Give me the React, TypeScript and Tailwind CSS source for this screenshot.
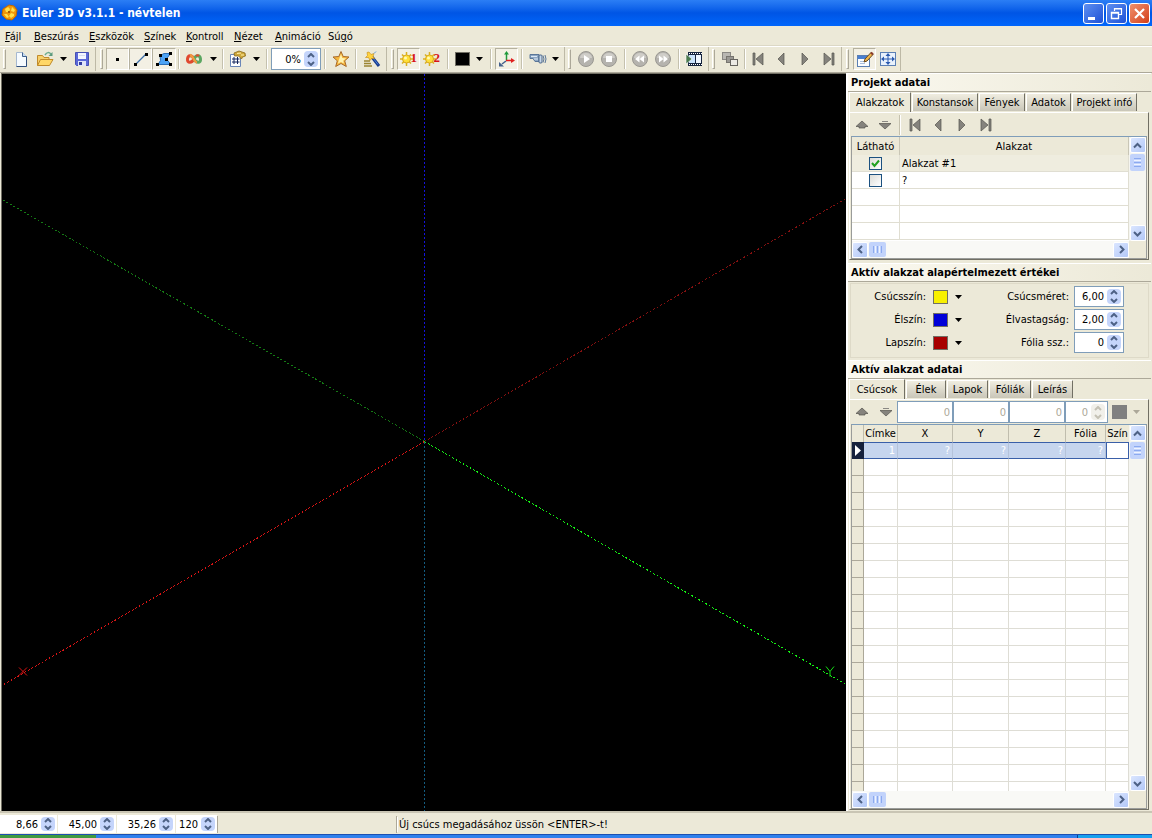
import type { ReactNode } from "react";

/* ---------- icons ---------- */

function Icon({ children, w = 18, h = 18 }: { children: ReactNode; w?: number; h?: number }) {
  return (
    <svg width={w} height={h} viewBox={`0 0 ${w} ${h}`} className="block shrink-0" aria-hidden="true">
      {children}
    </svg>
  );
}

const AppIcon = () => (
  <Icon>
    <path d="M8 1l5 1 3 4-1 6-4 4-6-1-4-4 1-6z" fill="#f0960a" stroke="#c26a00" />
    <path d="M4 5l3-2 2 2-1 3-3 0zM11 3l3 3-1 2-3-1zM3 10l3 0 2 3-2 1zM10 9l3 1 0 2-3 2-2-2z" fill="#ffe04a" />
    <path d="M7 7l2 0 0 2-2 0z" fill="#a85a00" />
  </Icon>
);

const NewIcon = () => (
  <Icon>
    <path d="M4.500 2.500h6l4 4v10h-10z" fill="#f6fbff" stroke="#a5b8d0" />
    <path d="M10.500 2.500v4h4" fill="#c7dcf2" stroke="#41638f" />
    <path d="M14.500 6.500v10h-10" fill="none" stroke="#2f4f7e" />
  </Icon>
);

const OpenIcon = () => (
  <Icon>
    <path d="M1.500 15.500v-10h5l1.500 2h5v3" fill="#f7d06a" stroke="#c08a2a" />
    <path d="M1.500 15.500l3-6h12.500l-3.500 6z" fill="#ffd766" stroke="#c08a2a" />
    <path d="M9 5c2-3 4-3 6-1" fill="none" stroke="#6aaa8c" strokeWidth="1.500" />
    <path d="M16.500 2v4h-4z" fill="#5a9a7c" />
  </Icon>
);

const SaveIcon = () => (
  <Icon>
    <path d="M2.500 2.500h13v13h-12l-1-1z" fill="#5a68d8" stroke="#4650b4" />
    <rect x="5" y="3" width="8" height="6" fill="#f2f5ff" />
    <path d="M6 5.500h6" stroke="#d4daf2" />
    <rect x="5" y="11" width="8" height="5" fill="#dfe4f8" />
    <rect x="6" y="12" width="3" height="3" fill="#323c9e" />
  </Icon>
);

const DotIcon = () => (
  <Icon>
    <rect x="7" y="8" width="3" height="3" fill="#000" />
  </Icon>
);

const LineIcon = () => (
  <Icon>
    <path d="M4 14L14 4" stroke="#3b6ea8" strokeWidth="1.300" />
    <rect x="2" y="13" width="3" height="3" fill="#000" />
    <rect x="13" y="3" width="3" height="3" fill="#000" />
  </Icon>
);

const PolyIcon = () => (
  <Icon>
    <path d="M5 5.500l4-2 6.500 0-4 5.500 4.500 5.500H3l2.500-4z" fill="#4da3f5" stroke="#2c6fb8" />
    {[[4, 4], [14, 2], [10, 8], [14, 13], [1, 13]].map(([x, y]) => (
      <rect key={`${x}-${y}`} x={x} y={y} width="3" height="3" fill="#000" />
    ))}
  </Icon>
);

const InfinityIcon = () => (
  <Icon>
    <path d="M9 9C7 5 3 4.500 2.500 9S7 13 9 9" fill="none" stroke="#e0482e" strokeWidth="3" />
    <path d="M9 9c2-4 6-4.500 6.500 0S11 13 9 9" fill="none" stroke="#5aa660" strokeWidth="3" />
    <path d="M5 5c3 .5 4 7 7 7.500" fill="none" stroke="#f09a40" strokeWidth="2.500" />
    <path d="M11 6c1-1 2-1 3 0" stroke="#e04a30" strokeWidth="2" fill="none" />
  </Icon>
);

const HashIcon = () => (
  <Icon>
    <path d="M1.500 4.500h10v12h-10z" fill="#fff" stroke="#6a86b8" />
    <path d="M5 7v7M8.500 7v7M3 9h7.500M3 12h7.500" stroke="#17285e" />
    <path d="M5 3l5-2 6 2 .5 3-3 1-1 2-3-3-4 0z" fill="#cfa83a" stroke="#8a6a1c" strokeWidth=".8" />
    <path d="M8 3.500l4-.5M12 5l3 0" stroke="#fff0a8" />
  </Icon>
);

const StarIcon = () => (
  <Icon>
    <path d="M9 1.500l2.200 5 5.800.5-4.300 3.800 1.600 5.700L9 13.500l-5.300 3 1.600-5.700L1 7l5.800-.5z" fill="#f6b73c" stroke="#a86a2a" />
    <path d="M9 4l1.300 4 4 .5-3 2 .5 3-2.800-1.500-3 1.500.7-3z" fill="#fff3b0" />
  </Icon>
);

const WandIcon = () => (
  <Icon>
    <path d="M9 7l7 9" stroke="#173a8c" strokeWidth="3" />
    <path d="M10 8l5 6.500" stroke="#4a7fd8" />
    <path d="M6 2l2 2.500 3-1-1 3 1.500 2-3 0-1.500 2-1.500-3-3 0 2-2-.5-3z" fill="#ffd23e" stroke="#c28a14" strokeWidth=".6" />
    <path d="M1 11h6M1 13.500h7M1 16h8" stroke="#9a8430" strokeWidth="1.300" />
    <path d="M11 3.500l2-2" stroke="#5a9ae0" />
  </Icon>
);

function SunIcon({ n }: { n: string }) {
  return (
    <span className="relative block h-[18px] w-[18px]">
      <Icon>
        <path d="M6.500 2v14M0 9h13M2 4.500l9 9M11 4.500l-9 9" stroke="#d9b020" strokeWidth="1.500" />
        <circle cx="6.500" cy="9" r="4" fill="#ffe03a" stroke="#d9a820" />
        <circle cx="5.500" cy="8" r="1.500" fill="#fff9b8" />
      </Icon>
      <span className="absolute top-0 left-[11px] font-['Liberation_Serif',serif] text-[13px] leading-[16px] font-bold text-[#d81414]">{n}</span>
    </span>
  );
}

const AxesIcon = () => (
  <Icon>
    <path d="M8.500 10V4" stroke="#1f9a3c" strokeWidth="1.500" />
    <path d="M6 4.500L8.500 1l2.500 3.500z" fill="#1f9a3c" />
    <path d="M8 10.500h6" stroke="#e02020" strokeWidth="1.500" />
    <path d="M13 8l4 2.500L13 13z" fill="#e02020" />
    <path d="M8 11l-4 3" stroke="#44618c" strokeWidth="1.500" />
    <path d="M1 12v4.500h5z" fill="#44618c" />
  </Icon>
);

const CameraIcon = () => (
  <Icon>
    <path d="M1 4.500h9v7H6l-2-3H1z" fill="#8fa8c4" stroke="#5a7698" />
    <path d="M2 6.500h6M5 9h4" stroke="#dce8f4" />
    <rect x="10" y="5" width="3" height="8" rx="1" fill="#c8d8ea" stroke="#4a6688" />
    <path d="M14 5.500q2 3.500 0 7M16 5q2 4 0 8" fill="none" stroke="#5a7698" />
  </Icon>
);

function RoundIcon({ d }: { d: string }) {
  return (
    <Icon>
      <circle cx="9" cy="9" r="7.500" fill="#b5b3ae" stroke="#9a9892" />
      <path d="M3 8a6 5 0 0 1 12 0" fill="#cfcdc8" />
      <path d={d} fill="#fff" />
    </Icon>
  );
}

const FilmIcon = () => (
  <Icon>
    <rect x="3" y="2" width="14" height="14" fill="#16243e" />
    <path d="M4 3.500h13M4 14.500h13" stroke="#fff" strokeDasharray="1 1" />
    <rect x="4" y="5" width="6" height="8" fill="#c9e2fb" />
    <rect x="11" y="5" width="5" height="8" fill="#f0f7ff" />
    <path d="M1 4l6 5-6 5z" fill="#4a7a4e" stroke="#fff" strokeWidth=".6" />
  </Icon>
);

const LayersIcon = () => (
  <Icon>
    <rect x="1.500" y="2.500" width="8" height="7" fill="#b9b7b2" stroke="#8a8883" />
    <rect x="5.500" y="6.500" width="7" height="6" fill="#9a9893" stroke="#77756f" />
    <rect x="9.500" y="9.500" width="7" height="6" fill="#eceae4" stroke="#66645f" />
  </Icon>
);

const EditIcon = () => (
  <Icon>
    <rect x="1.500" y="5.500" width="12" height="11" fill="#fbfdff" stroke="#5a7fb4" />
    <rect x="2" y="6" width="11" height="3" fill="#4a7fd0" />
    <path d="M4 11.500h6M4 13.500h5" stroke="#a9bedc" />
    <path d="M8 12l1-3 6-6.500 2 2L11 11z" fill="#f0b64c" stroke="#6a4a20" />
    <path d="M15 2.500l2 2" stroke="#8a3a2a" strokeWidth="2" />
  </Icon>
);

const FullIcon = () => (
  <Icon>
    <rect x="1.500" y="2.500" width="15" height="13" fill="#e8f1fc" stroke="#5a7fb4" />
    <path d="M9 5v8M4 9h10" stroke="#2a5ab0" />
    <path d="M9 3l2.500 3h-5zM9 15l2.500-3h-5zM2 9l3-2.500v5zM16 9l-3-2.500v5z" fill="#2a5ab0" />
  </Icon>
);

const NAV: Record<string, string> = {
  first: "M4 3h2v12H4zM14 3v12L7 9z",
  prev: "M12 3v12L6 9z",
  next: "M6 3v12l6-6z",
  last: "M12 3h2v12h-2zM4 3v12l7-6z",
  up: "M9 5l6 5.500h-3V12H6v-1.500H3z",
  down: "M9 13l6-5.500H3z",
};

function NavIcon({ k }: { k: string }) {
  return (
    <Icon>
      <path d={NAV[k]} fill="#85837d" stroke="#55534e" strokeWidth=".7" />
      {k === "down" && <path d="M6 5.500h6" stroke="#8a8883" />}
    </Icon>
  );
}

const Caret = ({ muted = false }: { muted?: boolean }) => (
  <Icon w={7} h={4}>
    <path d="M0 0h7L3.500 4z" fill={muted ? "#aca899" : "#000"} />
  </Icon>
);

/* ---------- shared controls ---------- */

function ToolButton({ label, w, pressed = false, children }: { label: string; w: string; pressed?: boolean; children: ReactNode }) {
  return (
    <button
      type="button"
      aria-label={label}
      className={`flex h-[22px] shrink-0 items-center justify-center ${w} ${
        pressed ? "border border-t-[#b5b19f] border-r-white border-b-white border-l-[#b5b19f] bg-[#f3f0e4]" : ""
      }`}
    >
      {children}
    </button>
  );
}

const Sep = ({ w }: { w: string }) => (
  <span className={`flex shrink-0 justify-center ${w}`}>
    <span className="h-[20px] w-[2px] border-r border-l border-r-white border-l-[#c5c1ae]" />
  </span>
);

function Band({ label, grip, end, children }: { label: string; grip: string; end: string; children: ReactNode }) {
  return (
    <div role="group" aria-label={label} className={`flex h-[24px] shrink-0 items-center border-r border-[#bdb9a6] ${end}`}>
      <span className={`flex shrink-0 justify-center ${grip}`}>
        <span className="h-[20px] w-[3px] border border-t-white border-r-[#aca899] border-b-[#aca899] border-l-white" />
      </span>
      {children}
    </div>
  );
}

function Spinner({ muted = false }: { muted?: boolean }) {
  const tone = muted ? "bg-[#f1f0ea]" : "bg-[#c5d5fb]";
  const ink = muted ? "#c4c1b4" : "#4d6185";
  return (
    <span className="flex w-[14px] shrink-0 flex-col self-stretch">
      <button type="button" aria-label="Növelés" className={`flex min-h-0 flex-1 items-center justify-center rounded-t-sm ${tone}`}>
        <Icon w={8} h={5}>
          <path d="M1 4l3-3 3 3" fill="none" stroke={ink} strokeWidth="2" />
        </Icon>
      </button>
      <button type="button" aria-label="Csökkentés" className={`flex min-h-0 flex-1 items-center justify-center rounded-b-sm ${tone}`}>
        <Icon w={8} h={5}>
          <path d="M1 1l3 3 3-3" fill="none" stroke={ink} strokeWidth="2" />
        </Icon>
      </button>
    </span>
  );
}

function NumberBox({ id, label, value, box, muted = false }: { id: string; label?: string; value: string; box: string; muted?: boolean }) {
  return (
    <span className={`flex shrink-0 items-center gap-[3px] bg-white p-[2px] ${box}`}>
      <input
        id={id}
        aria-label={label}
        defaultValue={value}
        disabled={muted}
        className={`w-0 min-w-0 flex-1 bg-transparent text-right outline-none ${muted ? "text-[#aca899]" : "text-black"}`}
      />
      <Spinner muted={muted} />
    </span>
  );
}

const ARROWS: Record<string, string> = {
  up: "M3 8.500l3.500-3.500L10 8.500",
  down: "M3 5l3.500 3.500L10 5",
  left: "M8 3L4.500 6.500 8 10",
  right: "M5 3l3.500 3.500L5 10",
};

function ScrollButton({ dir, label }: { dir: string; label: string }) {
  return (
    <button
      type="button"
      aria-label={label}
      className="flex h-[16px] w-[16px] shrink-0 items-center justify-center rounded-[2px] border border-white bg-linear-to-br from-[#dbe6ff] to-[#b3c8f7]"
    >
      <Icon w={13} h={13}>
        <path d={ARROWS[dir]} fill="none" stroke="#4d6185" strokeWidth="2" />
      </Icon>
    </button>
  );
}

function VScroll() {
  return (
    <div className="flex w-[17px] shrink-0 flex-col items-center bg-[#f5f5f0]">
      <ScrollButton dir="up" label="Görgetés fel" />
      <span className="mt-px flex h-[17px] w-[15px] shrink-0 flex-col items-center justify-center gap-px rounded-[2px] bg-[#c2d3fb]">
        <span className="h-px w-[7px] bg-[#8caaf0]" />
        <span className="h-px w-[7px] bg-[#eef3ff]" />
        <span className="h-px w-[7px] bg-[#8caaf0]" />
        <span className="h-px w-[7px] bg-[#eef3ff]" />
        <span className="h-px w-[7px] bg-[#8caaf0]" />
      </span>
      <span className="flex-1" />
      <ScrollButton dir="down" label="Görgetés le" />
    </div>
  );
}

function HScroll() {
  return (
    <div className="flex h-[17px] shrink-0 bg-[#ece9d8]">
      <div className="flex flex-1 items-center bg-[#f9f9f6]">
        <ScrollButton dir="left" label="Görgetés balra" />
        <span className="ml-px flex h-[15px] w-[17px] items-center justify-center gap-px rounded-[2px] bg-[#c2d3fb]">
          <span className="h-[7px] w-px bg-[#8caaf0]" />
          <span className="h-[7px] w-px bg-[#eef3ff]" />
          <span className="h-[7px] w-px bg-[#8caaf0]" />
          <span className="h-[7px] w-px bg-[#eef3ff]" />
          <span className="h-[7px] w-px bg-[#8caaf0]" />
        </span>
        <span className="flex-1" />
        <ScrollButton dir="right" label="Görgetés jobbra" />
      </div>
      <span className="w-[17px]" />
    </div>
  );
}

const SectionTitle = ({ children }: { children: ReactNode }) => (
  <h2 className="h-[19px] shrink-0 border-t border-b border-t-white border-b-[#aca899] bg-linear-to-r from-[#fbf9f0] to-[#ece9d8] pl-[3px] text-[11px] leading-[17px] font-bold">
    {children}
  </h2>
);

function Tabs({ items }: { items: { name: string; w: string }[] }) {
  return (
    <div role="tablist" className="flex h-[20px] shrink-0 items-end pl-px">
      {items.map((t, i) => (
        <button
          key={t.name}
          type="button"
          role="tab"
          aria-selected={i === 0}
          className={`shrink-0 text-center whitespace-nowrap ${t.w} ${
            i === 0
              ? "h-[20px] border-t border-r border-l border-t-white border-r-[#716f64] border-l-white"
              : "mb-px ml-px h-[18px] border-t border-r border-l border-t-white border-r-[#716f64] border-l-white bg-linear-to-b from-[#f0ede0] to-[#c9c6b8]"
          }`}
        >
          {t.name}
        </button>
      ))}
    </div>
  );
}

/* ---------- window parts ---------- */

function TitleBar() {
  const btn = "flex h-[21px] w-[21px] items-center justify-center rounded-[3px] border border-white";
  const blue = "bg-linear-to-br from-[#5f8ff0] to-[#1e4fd6]";
  return (
    <header className="flex h-[26px] shrink-0 items-center bg-linear-to-b from-[#2b7ef5] via-[#0055e5] to-[#0166fb] pl-[1px]">
      <AppIcon />
      <h1 className="ml-[3px] text-[12px] font-bold text-white">
        Euler 3D v3.1.1 - névtelen
      </h1>
      <div className="ml-auto flex gap-[2px] pr-[2px]">
        <button type="button" aria-label="Kis méret" className={`${btn} ${blue}`}>
          <Icon w={19} h={19}>
            <rect x="4" y="13" width="7" height="3" fill="#fff" />
          </Icon>
        </button>
        <button type="button" aria-label="Előző méret" className={`${btn} ${blue}`}>
          <Icon w={19} h={19}>
            <path d="M7.500 7V4.500h7v6H12M7 5h8" fill="none" stroke="#fff" strokeWidth="1.200" />
            <path d="M4.500 8.500h7v6h-7zM4 9h8" fill="none" stroke="#fff" strokeWidth="1.400" />
          </Icon>
        </button>
        <button type="button" aria-label="Bezárás" className={`${btn} bg-linear-to-br from-[#f0906c] to-[#d23c12]`}>
          <Icon w={19} h={19}>
            <path d="M5 5l9 9M14 5l-9 9" stroke="#fff" strokeWidth="2.200" />
          </Icon>
        </button>
      </div>
    </header>
  );
}

const MENUS = [
  { pre: "", key: "F", rest: "ájl", w: "w-[29px]" },
  { pre: "", key: "B", rest: "eszúrás", w: "w-[55px]" },
  { pre: "", key: "E", rest: "szközök", w: "w-[55px]" },
  { pre: "", key: "S", rest: "zínek", w: "w-[42px]" },
  { pre: "", key: "K", rest: "ontroll", w: "w-[48px]" },
  { pre: "", key: "N", rest: "ézet", w: "w-[41px]" },
  { pre: "", key: "A", rest: "nimáció", w: "w-[53px]" },
  { pre: "Sú", key: "g", rest: "ó", w: "w-[40px]" },
];

function MenuBar() {
  return (
    <nav className="flex h-[20px] shrink-0 items-center border-b border-[#dcd8c6] pt-[2px] pl-[5px]">
      {MENUS.map((m) => (
        <button key={m.rest} type="button" className={`shrink-0 text-left whitespace-nowrap ${m.w}`}>
          {m.pre}
          <span className="underline">{m.key}</span>
          {m.rest}
        </button>
      ))}
    </nav>
  );
}

function ToolBar() {
  return (
    <div role="toolbar" aria-label="Eszköztár" className="flex h-[27px] shrink-0 items-start overflow-hidden border-t border-b border-t-white border-b-[#aca899]">
      <Band label="Fájl" grip="w-[9px]" end="pr-[1px]">
        <ToolButton label="Új" w="w-[24px]"><NewIcon /></ToolButton>
        <ToolButton label="Megnyitás" w="w-[24px]"><OpenIcon /></ToolButton>
        <ToolButton label="Legutóbbi fájlok" w="w-[13px]"><Caret /></ToolButton>
        <ToolButton label="Mentés" w="w-[24px]"><SaveIcon /></ToolButton>
      </Band>
      <Band label="Szerkesztés" grip="w-[10px]" end="pr-[2px]">
        <ToolButton label="Csúcs" w="w-[23px]" pressed><DotIcon /></ToolButton>
        <ToolButton label="Él" w="w-[23px]" pressed><LineIcon /></ToolButton>
        <ToolButton label="Lap" w="w-[24px]" pressed><PolyIcon /></ToolButton>
        <Sep w="w-[5px]" />
        <ToolButton label="Összekötés" w="w-[26px]"><InfinityIcon /></ToolButton>
        <ToolButton label="Összekötés módja" w="w-[12px]"><Caret /></ToolButton>
        <Sep w="w-[7px]" />
        <ToolButton label="Címkék" w="w-[24px]"><HashIcon /></ToolButton>
        <ToolButton label="Címkék módja" w="w-[12px]"><Caret /></ToolButton>
        <Sep w="w-[9px]" />
        <NumberBox id="percent" label="Átlátszóság" value="0%" box="h-[22px] w-[50px] border border-[#7f9db9]" />
        <Sep w="w-[8px]" />
        <ToolButton label="Csillagtest" w="w-[23px]"><StarIcon /></ToolButton>
        <Sep w="w-[8px]" />
        <ToolButton label="Varázsló" w="w-[24px]"><WandIcon /></ToolButton>
      </Band>
      <Band label="Megjelenítés" grip="w-[10px]" end="pr-[3px]">
        <ToolButton label="Első fény" w="w-[23px]" pressed><SunIcon n="1" /></ToolButton>
        <ToolButton label="Második fény" w="w-[23px]"><SunIcon n="2" /></ToolButton>
        <Sep w="w-[9px]" />
        <ToolButton label="Háttérszín" w="w-[20px]"><span className="h-[14px] w-[15px] border border-[#716f64] bg-black" /></ToolButton>
        <ToolButton label="Háttérszín választása" w="w-[15px]"><Caret /></ToolButton>
        <Sep w="w-[8px]" />
        <ToolButton label="Tengelyek" w="w-[23px]" pressed><AxesIcon /></ToolButton>
        <Sep w="w-[8px]" />
        <ToolButton label="Kamera" w="w-[23px]"><CameraIcon /></ToolButton>
        <ToolButton label="Kamera nézetei" w="w-[12px]"><Caret /></ToolButton>
      </Band>
      <Band label="Animáció" grip="w-[9px]" end="pr-[2px]">
        <ToolButton label="Lejátszás" w="w-[23px]"><RoundIcon d="M7 5l6 4-6 4z" /></ToolButton>
        <ToolButton label="Leállítás" w="w-[24px]"><RoundIcon d="M6 6h6v6H6z" /></ToolButton>
        <Sep w="w-[7px]" />
        <ToolButton label="Hátra" w="w-[23px]"><RoundIcon d="M8.500 5.500v7L4 9zM13 5.500v7L8.500 9z" /></ToolButton>
        <ToolButton label="Előre" w="w-[24px]"><RoundIcon d="M5 5.500v7L9.500 9zM9.500 5.500v7L14 9z" /></ToolButton>
        <Sep w="w-[7px]" />
        <ToolButton label="Film" w="w-[24px]"><FilmIcon /></ToolButton>
      </Band>
      <Band label="Alakzatok léptetése" grip="w-[9px]" end="pr-0">
        <ToolButton label="Rétegek" w="w-[24px]"><LayersIcon /></ToolButton>
        <Sep w="w-[5px]" />
        <ToolButton label="Első" w="w-[22px]"><NavIcon k="first" /></ToolButton>
        <ToolButton label="Előző" w="w-[24px]"><NavIcon k="prev" /></ToolButton>
        <ToolButton label="Következő" w="w-[24px]"><NavIcon k="next" /></ToolButton>
        <ToolButton label="Utolsó" w="w-[24px]"><NavIcon k="last" /></ToolButton>
      </Band>
      <Band label="Ablak" grip="w-[11px]" end="pr-0">
        <ToolButton label="Adatpanel" w="w-[23px]" pressed><EditIcon /></ToolButton>
        <ToolButton label="Teljes képernyő" w="w-[24px]"><FullIcon /></ToolButton>
      </Band>
    </div>
  );
}

function Viewport() {
  return (
    <main className="min-w-0 flex-1 border-t border-l border-[#716f64] bg-black">
      <svg viewBox="0 0 844 738" preserveAspectRatio="xMidYMid slice" className="block h-full w-full" role="img" aria-label="Koordináta-tengelyek">
        <g fill="none" strokeDasharray="2 2" shapeRendering="crispEdges">
          <path d="M422.500 0v368" stroke="#1414d8" />
          <path d="M422.500 368v370" stroke="#145c80" />
          <path d="M422.500 368L0 126" stroke="#147814" />
          <path d="M422.500 368L844 125" stroke="#841010" />
          <path d="M422.500 368L0 612" stroke="#d81414" />
          <path d="M422.500 368L844 611" stroke="#14f014" />
        </g>
        <path d="M17 594l8 8M25 594l-8 8" stroke="#d81414" />
        <path d="M824 593l4 5 4-5M828 598v5" fill="none" stroke="#14e014" />
      </svg>
    </main>
  );
}

function ProjectData() {
  const cell = "border-r border-b border-[#e0ded2]";
  const rows = [
    { name: "Alakzat #1", checked: true },
    { name: "?", checked: false },
  ];
  return (
    <section className="flex shrink-0 flex-col">
      <SectionTitle>Projekt adatai</SectionTitle>
      <Tabs
        items={[
          { name: "Alakzatok", w: "w-[62px]" },
          { name: "Konstansok", w: "w-[66px]" },
          { name: "Fények", w: "w-[46px]" },
          { name: "Adatok", w: "w-[45px]" },
          { name: "Projekt infó", w: "w-[65px]" },
        ]}
      />
      <div className="mr-[2px] ml-px flex flex-col border border-t-white border-r-[#716f64] border-b-[#716f64] border-l-white">
        <div className="flex h-[23px] items-center">
          <ToolButton label="Fel" w="w-[24px]"><NavIcon k="up" /></ToolButton>
          <ToolButton label="Le" w="w-[22px]"><NavIcon k="down" /></ToolButton>
          <Sep w="w-[8px]" />
          <ToolButton label="Első alakzat" w="w-[22px]"><NavIcon k="first" /></ToolButton>
          <ToolButton label="Előző alakzat" w="w-[24px]"><NavIcon k="prev" /></ToolButton>
          <ToolButton label="Következő alakzat" w="w-[24px]"><NavIcon k="next" /></ToolButton>
          <ToolButton label="Utolsó alakzat" w="w-[24px]"><NavIcon k="last" /></ToolButton>
        </div>
        <div className="mr-px ml-px flex flex-col border border-[#9a9c9a] border-t-[#7f9db9]">
          <div className="flex h-[104px]">
            <div className="min-w-0 flex-1 overflow-hidden bg-white">
              <table className="w-full table-fixed border-separate border-spacing-0">
                <colgroup>
                  <col className="w-[48px]" />
                  <col />
                </colgroup>
                <thead>
                  <tr className="h-[18px] bg-[#ece9d8]">
                    <th className="border-r border-r-[#c9c6b6] p-0 font-normal">Látható</th>
                    <th className="border-r border-r-[#c9c6b6] p-0 font-normal">Alakzat</th>
                  </tr>
                </thead>
                <tbody>
                  {rows.map((r) => (
                    <tr key={r.name} className={`h-[17px] ${r.checked ? "bg-[#efeddf]" : ""}`}>
                      <td className={`p-0 ${cell}`}>
                        <span className="relative mx-auto flex h-[13px] w-[13px]">
                          <input
                            type="checkbox"
                            aria-label={`${r.name} látható`}
                            defaultChecked={r.checked}
                            className="peer h-[13px] w-[13px] appearance-none border border-[#1c5180] bg-linear-to-br from-[#dcdcd7] to-white"
                          />
                          <svg viewBox="0 0 13 13" className="pointer-events-none absolute inset-0 hidden h-[13px] w-[13px] peer-checked:block" aria-hidden="true">
                            <path d="M3 6l2.500 3L10 3.500" fill="none" stroke="#21a121" strokeWidth="2" />
                          </svg>
                        </span>
                      </td>
                      <td className={`p-0 pl-[2px] ${cell}`}>{r.name}</td>
                    </tr>
                  ))}
                  {[0, 1, 2].map((n) => (
                    <tr key={n} className="h-[17px]">
                      <td className={`p-0 ${cell}`} />
                      <td className={`p-0 ${cell}`} />
                    </tr>
                  ))}
                </tbody>
              </table>
            </div>
            <VScroll />
          </div>
          <HScroll />
        </div>
      </div>
    </section>
  );
}

const DEFAULTS = [
  { color: "Csúcsszín:", swatch: "bg-[#f8f000]", size: "Csúcsméret:", value: "6,00", id: "vertex-size" },
  { color: "Élszín:", swatch: "bg-[#0000d8]", size: "Élvastagság:", value: "2,00", id: "edge-width" },
  { color: "Lapszín:", swatch: "bg-[#a80000]", size: "Fólia ssz.:", value: "0", id: "layer-number" },
];

function ActiveDefaults() {
  return (
    <section className="mt-[3px] flex shrink-0 flex-col">
      <SectionTitle>Aktív alakzat alapértelmezett értékei</SectionTitle>
      <div className="mx-[2px] mt-px mb-[2px] flex flex-col gap-[2px] border border-[#dedac8] pt-[2px] pb-[4px]">
        {DEFAULTS.map((d) => (
          <div key={d.id} className="flex h-[21px] items-center">
            <span className="w-[75px] shrink-0 text-right">{d.color}</span>
            <button type="button" aria-label={d.color} className="ml-[7px] flex items-center gap-[7px]">
              <span className={`h-[14px] w-[15px] border border-[#716f64] ${d.swatch}`} />
              <Caret />
            </button>
            <label htmlFor={d.id} className="w-[107px] shrink-0 text-right">
              {d.size}
            </label>
            <span className="w-[5px]" />
            <NumberBox id={d.id} value={d.value} box="h-[21px] w-[50px] border border-[#7f9db9]" />
          </div>
        ))}
      </div>
    </section>
  );
}

function ActiveData() {
  const cell = "border-r border-b border-[#deddd5] p-0";
  const head = "border-r border-r-[#c0bdad] p-0 font-normal";
  const sel = "border-t border-b border-t-[#3a5fa8] border-b-[#3a5fa8] border-r border-r-[#b5c3da] bg-[#c6d5ee] p-0 pr-[2px] text-right text-white";
  const field = "h-[22px] shrink-0 border border-[#7f9db9] bg-white pr-[2px] text-right text-[#aca899] outline-none";
  return (
    <section className="flex min-h-0 flex-1 flex-col">
      <SectionTitle>Aktív alakzat adatai</SectionTitle>
      <Tabs
        items={[
          { name: "Csúcsok", w: "w-[56px]" },
          { name: "Élek", w: "w-[40px]" },
          { name: "Lapok", w: "w-[41px]" },
          { name: "Fóliák", w: "w-[42px]" },
          { name: "Leírás", w: "w-[41px]" },
        ]}
      />
      <div className="mr-[2px] ml-px flex min-h-0 flex-1 flex-col border border-t-white border-r-[#716f64] border-b-[#716f64] border-l-white">
        <div className="flex h-[24px] shrink-0 items-center">
          <ToolButton label="Csúcs fel" w="w-[24px]"><NavIcon k="up" /></ToolButton>
          <ToolButton label="Csúcs le" w="w-[23px]"><NavIcon k="down" /></ToolButton>
          <input aria-label="X" disabled defaultValue="0" className={`w-[56px] ${field}`} />
          <input aria-label="Y" disabled defaultValue="0" className={`w-[56px] ${field}`} />
          <input aria-label="Z" disabled defaultValue="0" className={`w-[56px] ${field}`} />
          <NumberBox id="layer" label="Fólia" value="0" muted box="h-[22px] w-[43px] border border-[#7f9db9]" />
          <button type="button" aria-label="Szín" className="ml-[4px] flex items-center gap-[6px]">
            <span className="h-[14px] w-[15px] bg-[#808080]" />
            <Caret muted />
          </button>
        </div>
        <div className="mr-px ml-px flex min-h-0 flex-1 flex-col border border-[#9a9c9a] border-t-[#7f9db9]">
          <div className="flex min-h-0 flex-1">
            <div className="min-h-0 min-w-0 flex-1 overflow-hidden bg-white">
              <table className="w-full table-fixed border-separate border-spacing-0">
                <colgroup>
                  <col className="w-[12px]" />
                  <col className="w-[34px]" />
                  <col className="w-[55px]" />
                  <col className="w-[56px]" />
                  <col className="w-[57px]" />
                  <col className="w-[40px]" />
                  <col />
                </colgroup>
                <thead>
                  <tr className="h-[17px] bg-[#ece9d8]">
                    <th className={head} aria-label="Jelölő" />
                    <th className={head}>Címke</th>
                    <th className={head}>X</th>
                    <th className={head}>Y</th>
                    <th className={head}>Z</th>
                    <th className={head}>Fólia</th>
                    <th className="p-0 font-normal">Szín</th>
                  </tr>
                </thead>
                <tbody>
                  <tr className="h-[17px]">
                    <td className="bg-[#16213c] p-0 pl-[3px]">
                      <Icon w={7} h={11}>
                        <path d="M0 0l6 5.500L0 11z" fill="#fff" />
                      </Icon>
                    </td>
                    <td className={sel}>1</td>
                    <td className={sel}>?</td>
                    <td className={sel}>?</td>
                    <td className={sel}>?</td>
                    <td className={sel}>?</td>
                    <td className="border border-[#3a5fa8] bg-white p-0" />
                  </tr>
                  {Array.from({ length: 20 }, (_, i) => (
                    <tr key={i} className="h-[17px]">
                      <td className="border-r border-b border-[#aca899] bg-[#ece9d8] p-0" />
                      <td className={cell} />
                      <td className={cell} />
                      <td className={cell} />
                      <td className={cell} />
                      <td className={cell} />
                      <td className={cell} />
                    </tr>
                  ))}
                </tbody>
              </table>
            </div>
            <VScroll />
          </div>
          <HScroll />
        </div>
      </div>
    </section>
  );
}

function StatusBar() {
  return (
    <footer className="flex h-[23px] shrink-0 items-center border-t-2 border-t-[#c9c5b4] pt-px">
      <NumberBox id="zoom" label="Nagyítás" value="8,66" box="h-[18px] w-[57px]" />
      <span className="w-px" />
      <NumberBox id="alpha" label="Vízszintes szög" value="45,00" box="h-[18px] w-[58px]" />
      <span className="w-px" />
      <NumberBox id="beta" label="Függőleges szög" value="35,26" box="h-[18px] w-[58px]" />
      <span className="w-px" />
      <NumberBox id="distance" label="Távolság" value="120" box="h-[18px] w-[41px]" />
      <span className="h-[17px] w-[180px] shrink-0 border-r border-l border-r-[#aca899] border-l-[#aca899]" />
      <p className="border-l border-white pl-px whitespace-nowrap">Új csúcs megadásához üssön &lt;ENTER&gt;-t!</p>
    </footer>
  );
}

export default function App() {
  return (
    <div className="flex h-screen flex-col overflow-hidden bg-[#ece9d8] font-['DejaVu_Sans_Condensed','DejaVu_Sans',sans-serif] text-[11px] leading-[15px] text-black">
      <TitleBar />
      <MenuBar />
      <ToolBar />
      <div className="flex min-h-0 flex-1 pl-px">
        <Viewport />
        <aside className="flex w-[306px] shrink-0 flex-col border-l-2 border-l-white pr-px pb-px">
          <ProjectData />
          <ActiveDefaults />
          <ActiveData />
        </aside>
      </div>
      <StatusBar />
      <div className="flex h-[4px] shrink-0 border-t border-[#1c4fb0]">
        <span className="w-[96px] bg-[#3f9a3f]" />
        <span className="flex-1 bg-[#2f80ec]" />
        <span className="w-[75px] border-l border-[#0c3f90] bg-[#16a0ee]" />
      </div>
    </div>
  );
}
